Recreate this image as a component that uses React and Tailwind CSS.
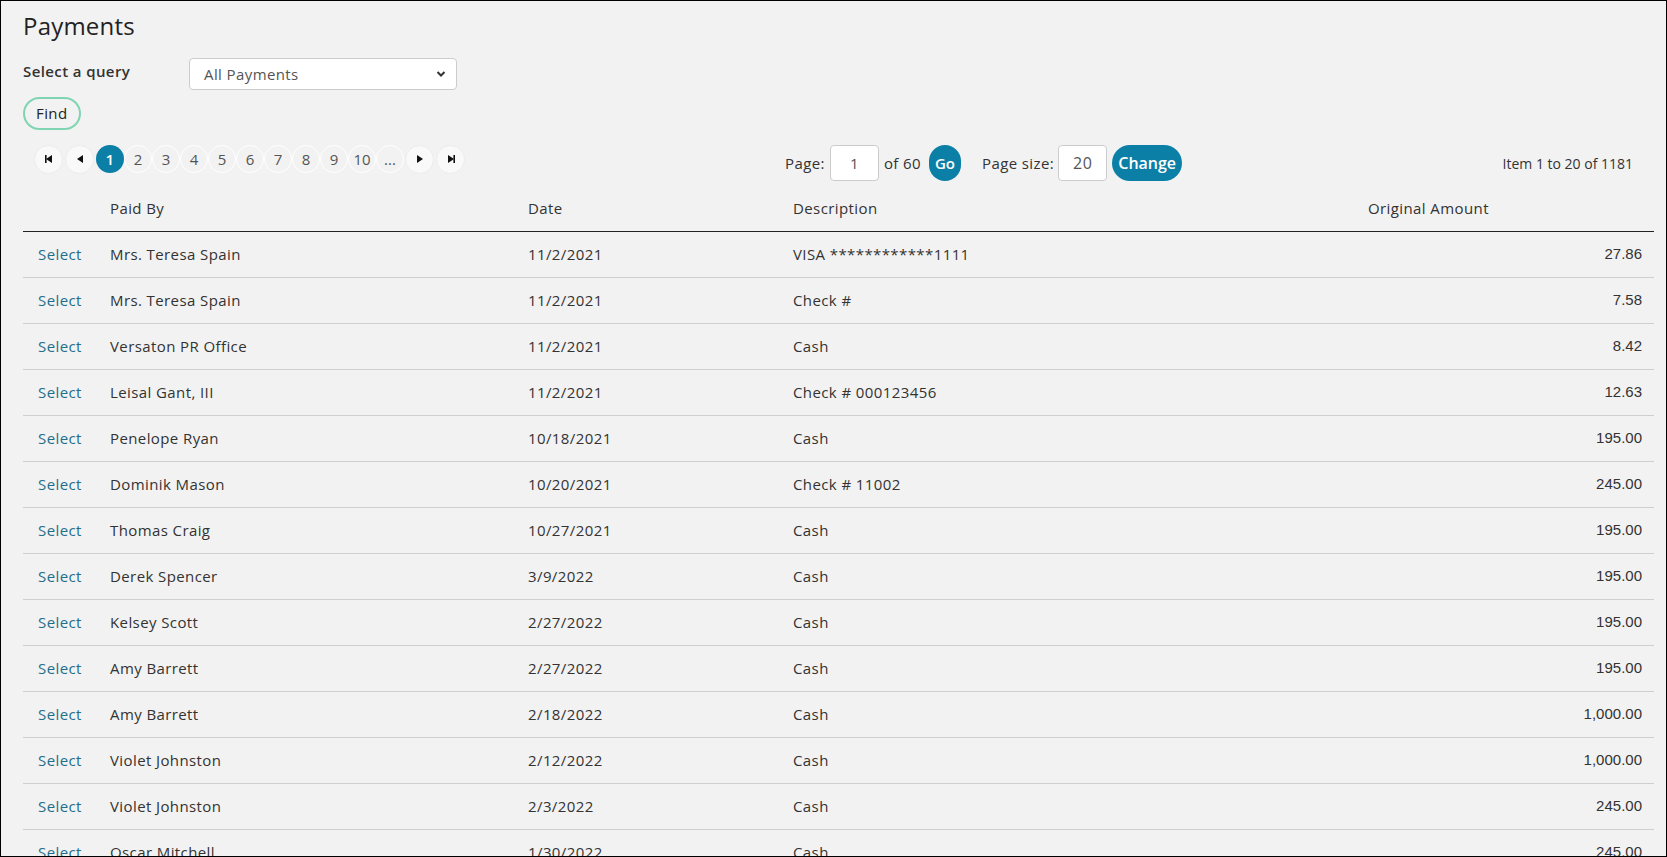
import React from 'react';

const ROWS = [
  { name: 'Mrs. Teresa Spain', date: '11/2/2021', desc: 'VISA ************1111', amount: '27.86' },
  { name: 'Mrs. Teresa Spain', date: '11/2/2021', desc: 'Check #', amount: '7.58' },
  { name: 'Versaton PR Office', date: '11/2/2021', desc: 'Cash', amount: '8.42' },
  { name: 'Leisal Gant, III', date: '11/2/2021', desc: 'Check # 000123456', amount: '12.63' },
  { name: 'Penelope Ryan', date: '10/18/2021', desc: 'Cash', amount: '195.00' },
  { name: 'Dominik Mason', date: '10/20/2021', desc: 'Check # 11002', amount: '245.00' },
  { name: 'Thomas Craig', date: '10/27/2021', desc: 'Cash', amount: '195.00' },
  { name: 'Derek Spencer', date: '3/9/2022', desc: 'Cash', amount: '195.00' },
  { name: 'Kelsey Scott', date: '2/27/2022', desc: 'Cash', amount: '195.00' },
  { name: 'Amy Barrett', date: '2/27/2022', desc: 'Cash', amount: '195.00' },
  { name: 'Amy Barrett', date: '2/18/2022', desc: 'Cash', amount: '1,000.00' },
  { name: 'Violet Johnston', date: '2/12/2022', desc: 'Cash', amount: '1,000.00' },
  { name: 'Violet Johnston', date: '2/3/2022', desc: 'Cash', amount: '245.00' },
  { name: 'Oscar Mitchell', date: '1/30/2022', desc: 'Cash', amount: '245.00' },
];

const PAGES = ['2', '3', '4', '5', '6', '7', '8', '9', '10', '...'];

const NavIcon = ({ dir, bar }) => (
  <svg width="10" height="10" viewBox="0 0 10 10" fill="#111">
    {dir === 'left' ? <polygon points="8,1 8,9 2,5" /> : <polygon points="2,1 2,9 8,5" />}
    {bar && (dir === 'left' ? <rect x="1" y="1" width="1.6" height="8" /> : <rect x="7.4" y="1" width="1.6" height="8" />)}
  </svg>
);

const NavButton = ({ children }) => (
  <button className="w-[29px] h-[29px] rounded-full bg-[#f9f9f9] border border-[#ececec] flex items-center justify-center">
    {children}
  </button>
);

export default function App() {
  return (
    <div className="h-screen overflow-hidden border border-black bg-[#f2f2f2] text-[#333] font-['Open_Sans',sans-serif] tracking-[0.4px] px-[22px]">
      <h1 className="text-[24px] leading-[30px] pt-[10px] text-[#222] tracking-[0.2px]">Payments</h1>

      <div className="flex items-start mt-[20px]">
        <label className="w-[166px] text-[15px] font-semibold text-[#333] leading-[20px]">Select a query</label>
        <div className="w-[268px] h-[32px] bg-white border border-[#ccc] rounded-[4px] flex items-center justify-between pl-[14px] pr-[10px] -mt-[3px]">
          <span className="text-[15px] text-[#555]">All Payments</span>
          <svg width="10" height="8" viewBox="0 0 10 8" fill="none" stroke="#333" strokeWidth="2">
            <path d="M1.5 2 L5 5.5 L8.5 2" />
          </svg>
        </div>
      </div>

      <button className="mt-[7px] h-[33px] px-[11px] rounded-full border-2 border-[#7fd5b2] text-[15px] text-[#222]">Find</button>

      <div className="flex items-center mt-[15px] h-[36px]">
        <div className="flex items-center ml-[11px] -mt-[8px]">
          <NavButton><NavIcon dir="left" bar /></NavButton>
          <div className="w-[2px]" />
          <NavButton><NavIcon dir="left" /></NavButton>
          <div className="w-[2px]" />
          <div className="w-[28px] h-[28px] rounded-full bg-[#0b7fa6] text-white text-[15px] font-semibold flex items-center justify-center">1</div>
          {PAGES.map((p) => (
            <div key={p} className="w-[28px] h-[28px] rounded-full border border-white text-[15px] tracking-normal text-[#555] flex items-center justify-center">
              {p}
            </div>
          ))}
          <div className="w-[1px]" />
          <NavButton><NavIcon dir="right" /></NavButton>
          <div className="w-[2px]" />
          <NavButton><NavIcon dir="right" bar /></NavButton>
        </div>

        <div className="flex items-center ml-[320px] text-[15px] text-[#333]">
          <span>Page:</span>
          <div className="ml-[5px] w-[49px] h-[36px] bg-white border border-[#ccc] rounded-[4px] flex items-center justify-center text-[#555]">1</div>
          <span className="ml-[5px]">of 60</span>
          <button className="ml-[8px] w-[32px] h-[36px] rounded-full bg-[#0b7fa6] text-white text-[15px] font-semibold tracking-normal">Go</button>
          <span className="ml-[21px]">Page size:</span>
          <div className="ml-[4px] w-[49px] h-[36px] bg-white border border-[#ccc] rounded-[4px] flex items-center justify-center text-[#555] text-[16px]">20</div>
          <button className="ml-[5px] w-[70px] h-[36px] rounded-full bg-[#0b7fa6] text-white text-[16px] font-semibold tracking-normal">Change</button>
        </div>

        <div className="ml-auto pr-[11px] text-[14px] tracking-normal text-[#333]">Item 1 to 20 of 1181</div>
      </div>

      <table className="w-[1631px] mt-[4px] table-fixed border-collapse text-[15px]">
        <colgroup>
          <col className="w-[72px]" />
          <col className="w-[418px]" />
          <col className="w-[265px]" />
          <col className="w-[575px]" />
          <col />
        </colgroup>
        <thead>
          <tr className="h-[46px] border-b border-[#222]">
            <th />
            <th className="text-left font-normal pl-[15px]">Paid By</th>
            <th className="text-left font-normal pl-[15px]">Date</th>
            <th className="text-left font-normal pl-[15px]">Description</th>
            <th className="text-left font-normal pl-[15px]">Original Amount</th>
          </tr>
        </thead>
        <tbody>
          {ROWS.map((r, i) => (
            <tr key={i} className="h-[46px] border-b border-[#cfcfcf]">
              <td className="pl-[15px]"><a className="text-[#1d6f8c] cursor-pointer">Select</a></td>
              <td className="pl-[15px]">{r.name}</td>
              <td className="pl-[15px]">{r.date}</td>
              <td className="pl-[15px]">{r.desc}</td>
              <td className="text-right pr-[12px] font-['Liberation_Sans',sans-serif] tracking-normal text-[15px]">{r.amount}</td>
            </tr>
          ))}
        </tbody>
      </table>
    </div>
  );
}
